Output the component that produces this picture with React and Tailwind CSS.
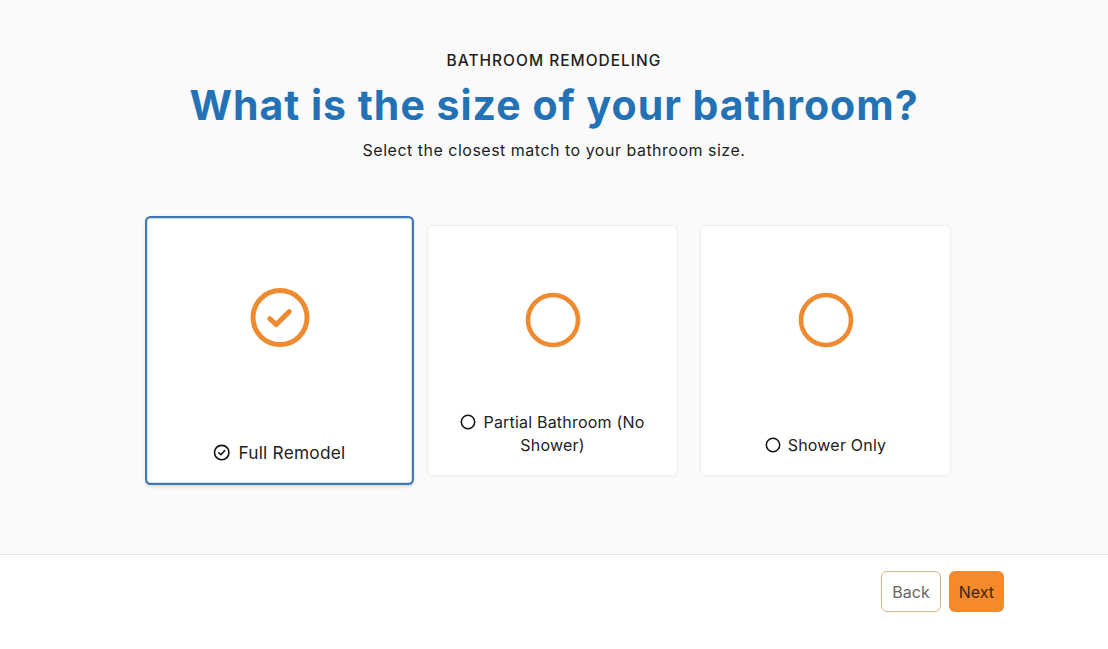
import { useState } from "react";

const options = [
    { id: "full", label: "Full Remodel" },
    { id: "partial", label: "Partial Bathroom (No Shower)" },
    { id: "shower", label: "Shower Only" },
];

function BigIcon({ checked }) {
    return (
        <svg width="60" height="60" viewBox="0 0 60 60" fill="none">
            <circle cx="30" cy="30" r="25" stroke="#ee8a2f" strokeWidth="4.6" />
            {checked && (
                <polyline
                    points="20.5,31 26.5,36.5 38.5,24.5"
                    stroke="#ee8a2f"
                    strokeWidth="4.6"
                    strokeLinecap="round"
                    strokeLinejoin="round"
                />
            )}
        </svg>
    );
}

function SmallIcon({ checked }) {
    return (
        <svg
            width="16"
            height="16"
            viewBox="0 0 16 16"
            fill="none"
            className="inline-block align-[-2px] mr-[7px]"
        >
            <circle cx="8" cy="8" r="6.7" stroke="#111" strokeWidth="1.5" />
            {checked && (
                <polyline
                    points="5.3,8.2 7.2,10 10.7,6.3"
                    stroke="#111"
                    strokeWidth="1.5"
                    strokeLinecap="round"
                    strokeLinejoin="round"
                />
            )}
        </svg>
    );
}

export default function App() {
    const [selected, setSelected] = useState("full");

    return (
        <div className="min-h-[649px] bg-white font-['Inter',sans-serif] text-[#222]">
            {/* Question area */}
            <div className="h-[555px] bg-[#fafafa] border-b border-[#e6e6e6] flex flex-col items-center pt-[51px]">
                <p className="text-[15.5px] leading-5 font-medium tracking-[1px] text-[#1e1e1e]">
                    BATHROOM REMODELING
                </p>
                <h1 className="mt-[10px] text-[41px] leading-[48px] font-bold text-[#2372b5] tracking-[1px]">
                    What is the size of your bathroom?
                </h1>
                <p className="mt-[10px] text-[16px] leading-[22px] tracking-[0.5px] text-[#1e1e1e]">
                    Select the closest match to your bathroom size.
                </p>

                <div className="mt-[65px] mr-[3px] flex gap-6">
                    {options.map((opt) => {
                        const isSel = selected === opt.id;
                        return (
                            <button
                                key={opt.id}
                                onClick={() => setSelected(opt.id)}
                                className={`w-[249px] h-[249px] bg-white rounded-[5px] flex flex-col items-center justify-between pt-[62px] pb-[16px] px-6 ${
                                    isSel
                                        ? "border-2 border-[#3b78b4] scale-[1.08] shadow-[0_1px_3px_rgba(0,0,0,0.12)]"
                                        : "border-2 border-transparent shadow-[0_0_3px_rgba(0,0,0,0.12)]"
                                }`}
                            >
                                <BigIcon checked={isSel} />
                                <span className="text-[16px] leading-[23px] tracking-[0.2px] text-center text-[#222]">
                                    <SmallIcon checked={isSel} />
                                    {opt.label}
                                </span>
                            </button>
                        );
                    })}
                </div>
            </div>

            {/* Footer */}
            <div className="max-w-[900px] mx-auto pt-4 flex justify-end gap-2">
                <button className="h-[41px] px-[10px] rounded-md border border-[#dcb48a] bg-white text-[16px] text-[#666]">
                    Back
                </button>
                <button className="h-[41px] px-[10px] rounded-md bg-[#f6892a] text-[16px] text-[#3a2510]">
                    Next
                </button>
            </div>
        </div>
    );
}
